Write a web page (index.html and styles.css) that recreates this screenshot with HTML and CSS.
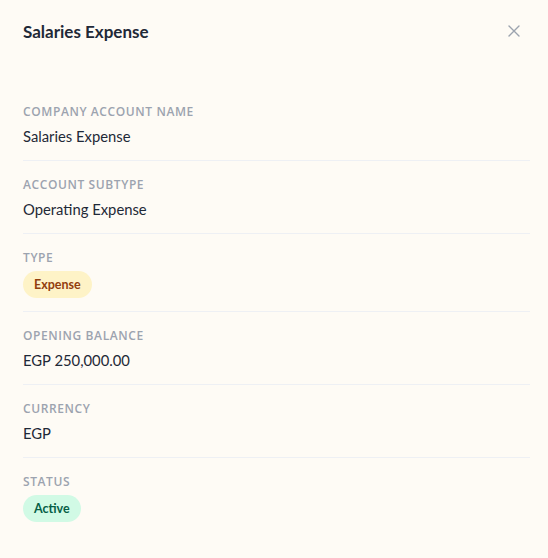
FILE: index.html
```html
<!DOCTYPE html>
<html lang="en">
<head>
    <meta charset="UTF-8">
    <title>Salaries Expense</title>
    <link rel="stylesheet" href="styles.css">
</head>
<body>
    <div class="panel">
        <div class="panel-header">
            <h2 class="panel-title">Salaries Expense</h2>
            <button class="close-btn" aria-label="Close">
                <svg width="12" height="12" viewBox="0 0 12 12" fill="none" stroke="currentColor" stroke-width="1.4" stroke-linecap="round">
                    <path d="M1 1L11 11M11 1L1 11"/>
                </svg>
            </button>
        </div>

        <div class="details">
            <div class="detail">
                <div class="detail-label">Company Account Name</div>
                <div class="detail-value">Salaries Expense</div>
            </div>
            <div class="detail">
                <div class="detail-label">Account Subtype</div>
                <div class="detail-value">Operating Expense</div>
            </div>
            <div class="detail">
                <div class="detail-label">Type</div>
                <div class="detail-value"><span class="badge badge-expense">Expense</span></div>
            </div>
            <div class="detail">
                <div class="detail-label">Opening Balance</div>
                <div class="detail-value">EGP 250,000.00</div>
            </div>
            <div class="detail">
                <div class="detail-label">Currency</div>
                <div class="detail-value">EGP</div>
            </div>
            <div class="detail">
                <div class="detail-label">Status</div>
                <div class="detail-value"><span class="badge badge-active">Active</span></div>
            </div>
        </div>
    </div>
</body>
</html>
```

FILE: styles.css
```css
body {
    margin: 0;
    background: #fefbf5;
    font-family: 'Lato', 'Open Sans', sans-serif;
    color: #1f2937;
}

.panel {
    padding: 0 18px 0 23px;
}

.panel-header {
    display: flex;
    justify-content: space-between;
    align-items: center;
    height: 62px;
    margin-bottom: 26px;
}

.panel-title {
    margin: 0;
    font-size: 17px;
    font-weight: 700;
    color: #1f2937;
}

.close-btn {
    background: none;
    border: none;
    padding: 0;
    width: 12px;
    height: 12px;
    margin-right: 10px;
    color: #9ca3af;
    display: flex;
    cursor: pointer;
}

.detail {
    padding: 16px 0 13px;
    border-bottom: 1px solid #eef0f4;
}

.detail:last-child {
    border-bottom: none;
}

.detail-label {
    font-family: 'Open Sans', sans-serif;
    font-size: 12px;
    line-height: 16px;
    font-weight: 600;
    text-transform: uppercase;
    letter-spacing: 0.05em;
    color: #9ca3af;
    margin-bottom: 5px;
}

.detail-value {
    font-size: 14.8px;
    line-height: 22px;
}

.badge {
    display: inline-block;
    font-size: 12.5px;
    font-weight: 700;
    line-height: 27px;
    padding: 0 11px;
    border-radius: 999px;
}

.badge-expense {
    background: #fef3c7;
    color: #92400e;
}

.badge-active {
    background: #d1fae5;
    color: #065f46;
}
```
